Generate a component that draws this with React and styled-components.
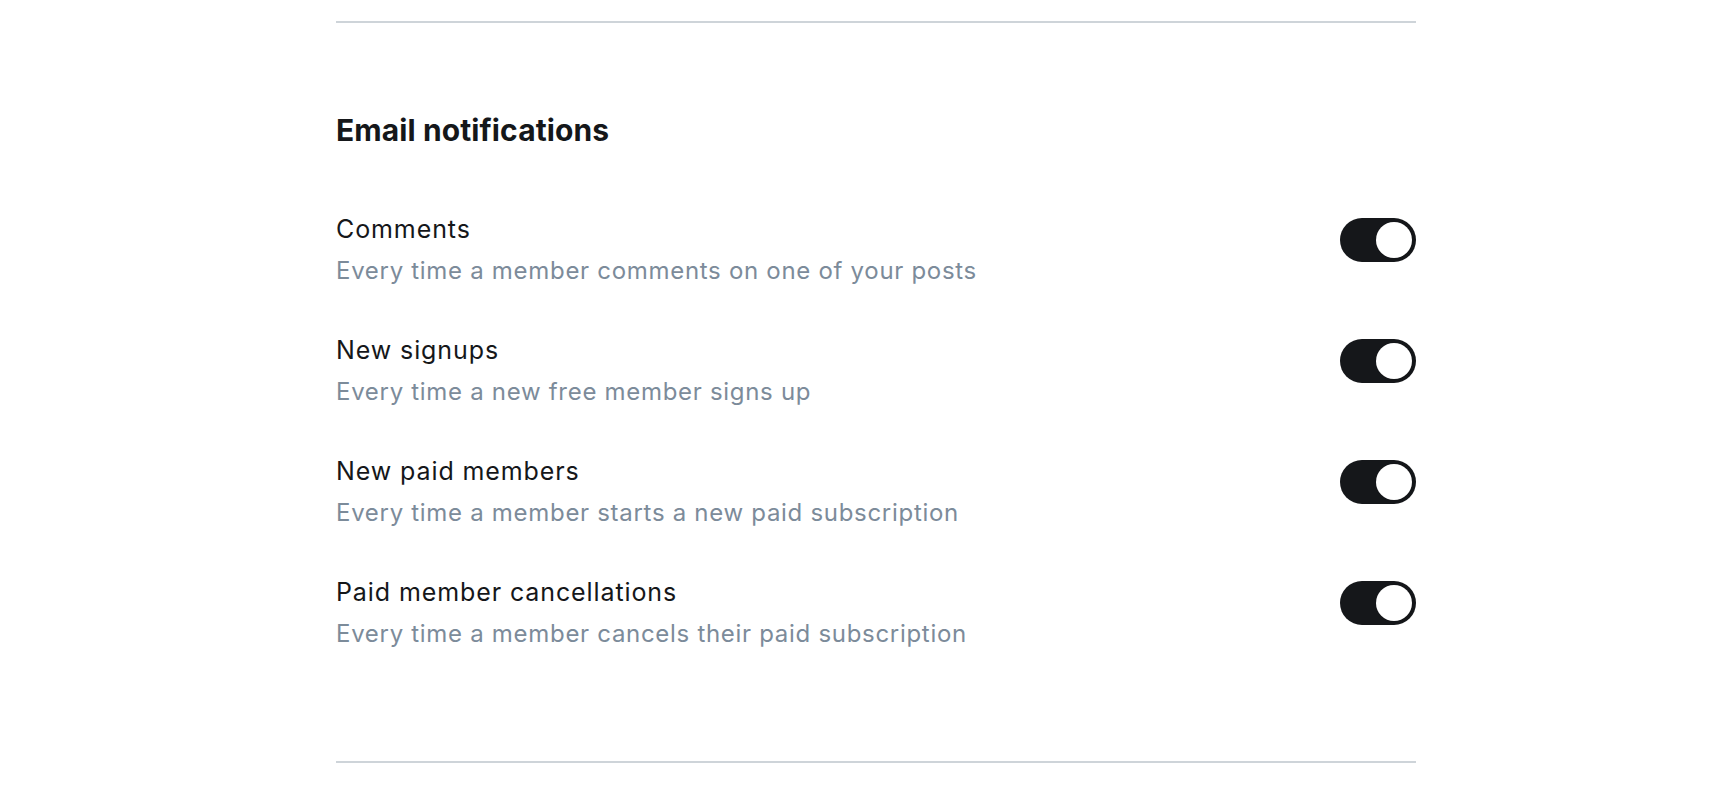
import React, { useState } from "react"
import styled, { createGlobalStyle } from "styled-components"

const GlobalStyle = createGlobalStyle`
  html, body {
    margin: 0;
    padding: 0;
    background: #ffffff;
  }
  body {
    font-family: Inter, "Noto Sans", sans-serif;
    color: #15171a;
    -webkit-font-smoothing: antialiased;
  }
`

const Page = styled.div`
  padding: 21px 296px 0 336px;
`

const Divider = styled.hr`
  margin: 0;
  border: 0;
  height: 2px;
  background: #ced4d9;
`

const Section = styled.section`
  padding: 90px 0 111px;
`

const Heading = styled.h2`
  margin: 0 0 66px;
  font-size: 30px;
  line-height: 34px;
  font-weight: 700;
  letter-spacing: 0.1px;
  color: #15171a;
`

const List = styled.div`
  display: flex;
  flex-direction: column;
  gap: 47px;
`

const Row = styled.div`
  display: flex;
  align-items: flex-start;
  justify-content: space-between;
`

const Texts = styled.div`
  display: flex;
  flex-direction: column;
  gap: 8px;
`

const Label = styled.div`
  font-size: 25px;
  line-height: 33px;
  font-weight: 400;
  letter-spacing: 0.9px;
  color: #15171a;
`

const Description = styled.div`
  font-size: 24px;
  line-height: 33px;
  letter-spacing: 0.7px;
  color: #7c8b9a;
`

const Switch = styled.button`
  position: relative;
  flex: none;
  margin-top: 5px;
  width: 76px;
  height: 44px;
  padding: 0;
  border: 0;
  border-radius: 999px;
  background: ${({ $on }) => ($on ? "#15171a" : "#ced4d9")};
  cursor: pointer;

  &::after {
    content: "";
    position: absolute;
    top: 4px;
    left: ${({ $on }) => ($on ? "36px" : "4px")};
    width: 36px;
    height: 36px;
    border-radius: 50%;
    background: #ffffff;
    box-shadow: 1px 1px 2px rgba(0, 0, 0, 0.15);
    transition: left 0.15s ease;
  }
`

const items = [
  { id: "comments", label: "Comments", text: "Every time a member comments on one of your posts" },
  { id: "signups", label: "New signups", text: "Every time a new free member signs up" },
  { id: "paid", label: "New paid members", text: "Every time a member starts a new paid subscription" },
  { id: "cancel", label: "Paid member cancellations", text: "Every time a member cancels their paid subscription" },
]

const Toggle = ({ label }) => {
  const [on, setOn] = useState(true)
  return <Switch $on={on} aria-label={label} onClick={() => setOn(!on)} />
}

export default function App() {
  return (
    <>
      <GlobalStyle />
      <Page>
        <Divider />
        <Section>
          <Heading>Email notifications</Heading>
          <List>
            {items.map(item => (
              <Row key={item.id}>
                <Texts>
                  <Label>{item.label}</Label>
                  <Description>{item.text}</Description>
                </Texts>
                <Toggle label={item.label} />
              </Row>
            ))}
          </List>
        </Section>
        <Divider />
      </Page>
    </>
  )
}
